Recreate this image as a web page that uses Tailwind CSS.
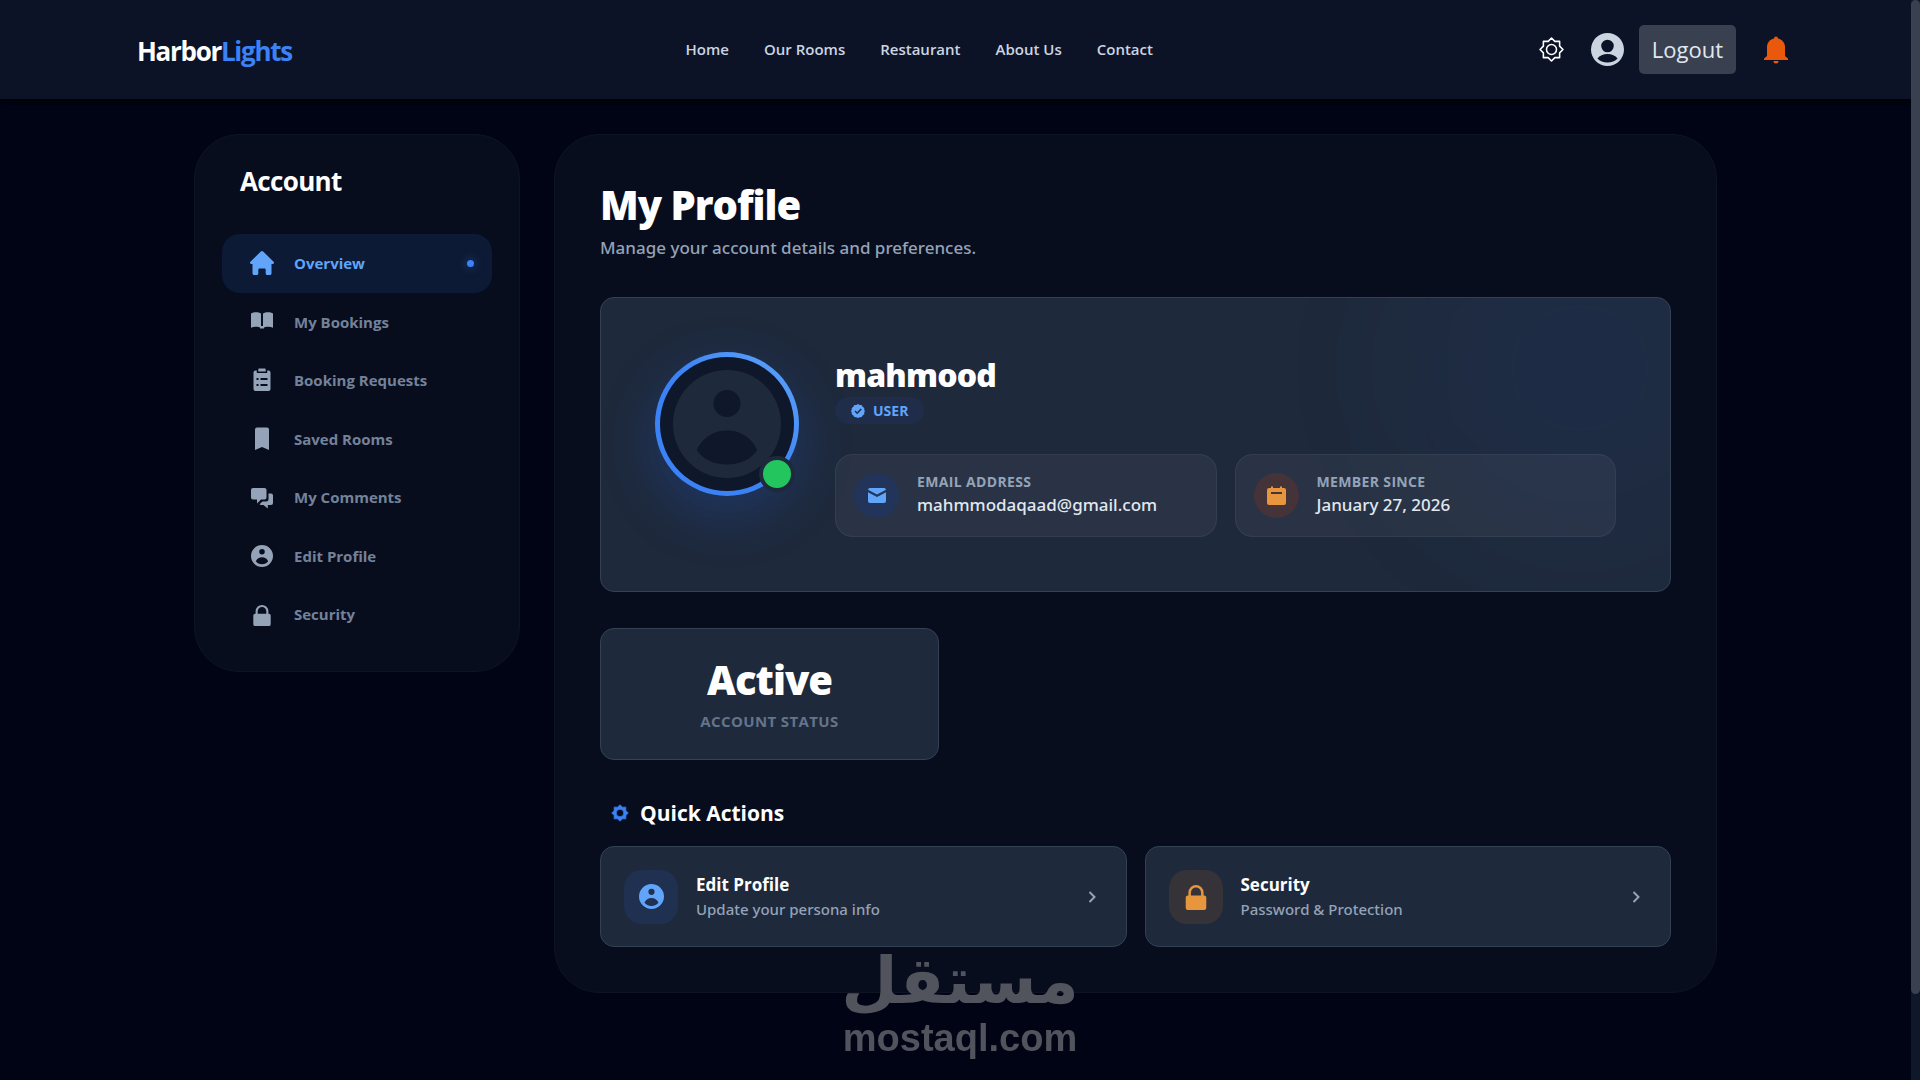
<!DOCTYPE html>
<html lang="en">

<head>
    <meta charset="UTF-8">
    <meta name="viewport" content="width=device-width, initial-scale=1.0">
    <title>HarborLights - My Profile</title>
    <script src="https://cdn.jsdelivr.net/npm/@tailwindcss/browser@4"></script>
</head>

<body class="min-h-screen overflow-hidden bg-[#010414] font-['Open_Sans','Noto_Sans',sans-serif] text-white">

    <!-- shared icons -->
    <svg class="hidden">
        <symbol id="icon-user" viewBox="2 2 20 20">
            <path fill-rule="evenodd" d="M12 2a10 10 0 1 1 0 20 10 10 0 0 1 0-20zM12 5.7a2.5 2.5 0 1 0 0 5 2.5 2.5 0 0 0 0-5zM6.4 16.8c1.1 1.7 3.2 2.7 5.6 2.7s4.5-1 5.6-2.7c-1-2.2-3.1-3.6-5.6-3.6s-4.6 1.4-5.6 3.6z" />
        </symbol>
        <symbol id="icon-lock" viewBox="0 0 24 24">
            <path fill-rule="evenodd" d="M5 10.5V8a7 7 0 0 1 14 0v2.5h.5a2 2 0 0 1 2 2V22a2 2 0 0 1-2 2h-15a2 2 0 0 1-2-2v-9.500a2 2 0 0 1 2-2zM7.300 10.500h9.400V8a4.700 4.700 0 0 0-9.400 0z" />
        </symbol>
        <symbol id="icon-chevron" viewBox="0 0 8 12">
            <path d="M1.5 1l5 5-5 5" fill="none" stroke="currentColor" stroke-width="2" />
        </symbol>
    </svg>

    <div class="pr-[9px]">
        <!--header-->
        <header class="relative bg-[#0d1326] shadow-md shadow-black/50">
            <div class="flex h-[99px] items-center justify-between pr-[123px] pl-[137px]">
                <a href="#" class="pt-1 pr-2 text-[26px] font-bold tracking-tighter">Harbor<span class="text-[#3b82f6]">Lights</span></a>
                <nav class="flex gap-[35px] text-[15px] font-semibold text-[#cbd5e1]">
                    <a href="#">Home</a>
                    <a href="#">Our Rooms</a>
                    <a href="#">Restaurant</a>
                    <a href="#">About Us</a>
                    <a href="#">Contact</a>
                </nav>
                <div class="flex items-center">
                    <button aria-label="Settings" class="mr-[27px]">
                        <svg class="size-[25px]" viewBox="0 0 24 24" fill="none" stroke="currentColor" stroke-width="1.5" stroke-linejoin="round">
                            <path d="M12 1l3.2 3.2h4.6v4.6L23 12l-3.2 3.2v4.6h-4.6L12 23l-3.2-3.2H4.2v-4.6L1 12l3.2-3.2V4.2h4.6z" />
                            <circle cx="12" cy="12" r="4.8" />
                        </svg>
                    </button>
                    <a href="#" aria-label="Profile" class="mr-[15px] text-[#cbd5e1]">
                        <svg class="size-[33px]" viewBox="2 2 20 20" fill="currentColor">
                            <path fill-rule="evenodd" d="M12 2a10 10 0 1 1 0 20 10 10 0 0 1 0-20zM12 6.1a3.8 3.8 0 1 0 0 7.6 3.8 3.8 0 0 0 0-7.6zM5.9 17.5c1.4 1.5 3.6 2.4 6.1 2.4s4.7-.9 6.1-2.4c-1.3-1.7-3.5-2.7-6.1-2.7s-4.8 1-6.1 2.7z" />
                        </svg>
                    </a>
                    <button class="mr-7 h-[49px] rounded-[5px] bg-[#394150] px-[13px] text-[22px] text-[#e2e8f0]">Logout</button>
                    <button aria-label="Notifications" class="text-[#ea580c]">
                        <svg class="h-7 w-6" viewBox="0 0 24 28" fill="currentColor">
                            <path d="M10 2.5a2 2 0 0 1 4 0c4.5 1 7 4.5 7 8.5v9l3 2.5V24H0v-1.5L3 20v-9c0-4 2.5-7.5 7-8.5zM9.5 25h5a2.5 2.5 0 0 1-5 0z" />
                        </svg>
                    </button>
                </div>
            </div>
        </header>

        <!--body-->
        <div class="mx-auto flex max-w-[1523px] items-start gap-[34px] pt-[35px]">
            <!--sidebar-->
            <aside class="w-[326px] shrink-0 rounded-[45px] border border-[#0f1425] bg-[#080d1e] p-[27px]">
                <h2 class="mb-[34px] pt-px pl-[18px] text-[26px] leading-[37px] font-bold tracking-tight">Account</h2>
                <nav class="grid h-[410px] auto-rows-fr text-[15px] font-bold text-[#748299]">
                    <a href="#" class="flex items-center gap-[19px] rounded-[18px] bg-[#0d1a35] px-[27px] text-[#60a5fa]">
                        <svg class="size-[26px]" viewBox="0 0 26 26" fill="currentColor">
                            <path d="M11.8 1.5a1.8 1.8 0 0 1 2.4 0l10.4 10.3c1 1 .4 2.2-.9 2.2H22.5v9.5c0 .9-.7 1.5-1.5 1.5h-3c-.8 0-1.300-.6-1.300-1.400V20c0-.9-.6-1.400-1.400-1.400h-4.600c-.8 0-1.400.5-1.400 1.400v3.600c0 .8-.5 1.400-1.300 1.400H5c-.8 0-1.500-.6-1.500-1.500V14H2.300c-1.300 0-1.900-1.200-.9-2.200z" />
                        </svg>
                        Overview
                        <span class="-mr-[9px] ml-auto size-[7px] rounded-full bg-[#3b82f6] shadow-[0_0_10px_#3b82f680]"></span>
                    </a>
                    <a href="#" class="flex items-center gap-[19px] px-[27px]">
                        <svg class="size-[26px] text-[#94a3b8]" viewBox="0 0 26 26" fill="currentColor">
                            <path d="M2 4.5c2.5-1.7 7.5-1.7 10 0v14.5c-2.5-1.5-7-1.7-10-.3zM14 4.5c2.5-1.7 7.5-1.7 10 0v14.2c-3-1.4-7.5-1.2-10 .3z" />
                            <path d="M11 17h4v2.5h-4z" />
                        </svg>
                        My Bookings
                    </a>
                    <a href="#" class="flex items-center gap-[19px] px-[27px]">
                        <svg class="size-[26px] text-[#94a3b8]" viewBox="0 0 26 26" fill="currentColor">
                            <path d="M10.3 1.5h5.4c.6 0 1 .4 1 1v2h-7.4v-2c0-.6.4-1 1-1z" />
                            <path fill-rule="evenodd" d="M7.8 3.5H6.5a2 2 0 0 0-2 2V22a2 2 0 0 0 2 2h13a2 2 0 0 0 2-2V5.5a2 2 0 0 0-2-2h-1.3V6H7.8zM7.5 11h2v2h-2zM11.5 11h7v2h-7zM7.5 17h2v2h-2zM11.5 17h7v2h-7z" />
                        </svg>
                        Booking Requests
                    </a>
                    <a href="#" class="flex items-center gap-[19px] px-[27px]">
                        <svg class="size-[26px] text-[#94a3b8]" viewBox="0 0 26 26" fill="currentColor">
                            <path d="M8 1.5h10a2 2 0 0 1 2 2V24l-7-3-7 3V3.5a2 2 0 0 1 2-2z" />
                        </svg>
                        Saved Rooms
                    </a>
                    <a href="#" class="flex items-center gap-[19px] px-[27px]">
                        <svg class="size-[26px] text-[#94a3b8]" viewBox="0 0 26 26" fill="currentColor">
                            <path d="M4 3h11.5a2 2 0 0 1 2 2v7.5a2 2 0 0 1-2 2H12L8 18.5v-4H4a2 2 0 0 1-2-2V5a2 2 0 0 1 2-2z" />
                            <path d="M19.5 8.5h2.5a2 2 0 0 1 2 2v7.5a2 2 0 0 1-2 2h-3.2V23.5L14.5 20H12a2 2 0 0 1-1.5-.8l3-2.7H17a2.5 2.5 0 0 0 2.5-2.5z" />
                        </svg>
                        My Comments
                    </a>
                    <a href="#" class="flex items-center gap-[19px] px-[27px]">
                        <svg class="h-[22px] w-[26px] text-[#94a3b8]" fill="currentColor"><use href="#icon-user" /></svg>
                        Edit Profile
                    </a>
                    <a href="#" class="flex items-center gap-[19px] px-[27px]">
                        <svg class="h-[22px] w-[26px] text-[#94a3b8]" fill="currentColor"><use href="#icon-lock" /></svg>
                        Security
                    </a>
                </nav>
            </aside>

            <!--profile-->
            <main class="min-w-0 flex-1 rounded-[45px] border border-[#0f1425] bg-[#080d1e] p-[45px]">
                <h1 class="text-[40px] leading-[50px] font-extrabold tracking-tight">My Profile</h1>
                <p class="mt-1 font-['Noto_Sans',sans-serif] text-[17px] leading-[27px] font-medium text-[#94a3b8]">Manage your account details and preferences.</p>

                <section class="relative mt-9 flex items-start gap-9 overflow-hidden rounded-[14px] border border-[#334155] bg-[#1e293b] p-[54px]">
                    <div class="absolute -top-[110px] -right-[90px] size-[360px] rounded-full bg-[#2563eb]/5 blur-3xl"></div>
                    <div class="relative size-36 shrink-0 rounded-full bg-linear-to-tr from-[#3b82f6] from-50% to-[#60a5fa] p-[5px] shadow-[0_18px_54px_#2563eb40]">
                        <div class="flex size-full items-center justify-center rounded-full bg-[#0f172a] text-[#1e293b]">
                            <svg class="size-[108px]" fill="currentColor"><use href="#icon-user" /></svg>
                        </div>
                        <span class="absolute right-1 bottom-1 size-9 rounded-full border-4 border-[#1e293b] bg-[#22c55e]"></span>
                    </div>
                    <div class="relative flex-1">
                        <h2 class="text-[32px] leading-[45px] font-extrabold tracking-tight">mahmood</h2>
                        <span class="inline-flex h-[27px] items-center gap-2 rounded-full bg-[#1f2d4a] px-4 text-[14px] font-bold text-[#60a5fa]">
                            <svg class="size-[14px]" viewBox="0 0 14 14">
                                <path fill="currentColor" d="M7 0l1.7.9 2 .1.9 1.800L13.300 4l-.1 2 .8 1-.8 1.500.1 1.800-1.700 1.100-.9 1.700-2 .1L7 14l-1.700-.8-2-.1-.9-1.700L.7 10.300l.1-1.800L0 7l.8-1.500L.7 4l1.700-1.200L3.300 1l2-.1z" />
                                <path fill="none" stroke="#1f2d4a" stroke-width="1.6" d="M4 7l2.2 2.2L10.2 5" />
                            </svg>
                            USER
                        </span>
                        <div class="mt-[30px] grid grid-cols-2 gap-[18px]">
                            <div class="flex h-[83px] items-center gap-[18px] rounded-[18px] border border-white/5 bg-white/5 px-[18px]">
                                <div class="flex size-[45px] items-center justify-center rounded-full bg-[#23345a] text-[#60a5fa]">
                                    <svg class="h-[15px] w-[18px]" viewBox="0 0 18 15" fill="currentColor">
                                        <path d="M2 0h14a2 2 0 0 1 2 1.8L9 6.5 0 1.8A2 2 0 0 1 2 0zM0 4.2L9 9l9-4.8V13a2 2 0 0 1-2 2H2a2 2 0 0 1-2-2z" />
                                    </svg>
                                </div>
                                <div>
                                    <div class="text-[14px] leading-[18px] font-bold tracking-wide text-[#94a3b8]">EMAIL ADDRESS</div>
                                    <div class="font-['Noto_Sans',sans-serif] text-[17px] leading-[27px] font-medium text-[#e2e8f0]">mahmmodaqaad@gmail.com</div>
                                </div>
                            </div>
                            <div class="flex h-[83px] items-center gap-[18px] rounded-[18px] border border-white/5 bg-white/5 px-[18px]">
                                <div class="flex size-[45px] items-center justify-center rounded-full bg-[#443338] text-[#e8963e]">
                                    <svg class="size-[19px]" viewBox="0 0 19 19" fill="currentColor">
                                        <path fill-rule="evenodd" d="M4 .5h2V2h7V.5h2V2h2a2 2 0 0 1 2 2v13a2 2 0 0 1-2 2H2a2 2 0 0 1-2-2V4a2 2 0 0 1 2-2h2zM4 6v2h11V6z" />
                                    </svg>
                                </div>
                                <div>
                                    <div class="text-[14px] leading-[18px] font-bold tracking-wide text-[#94a3b8]">MEMBER SINCE</div>
                                    <div class="font-['Noto_Sans',sans-serif] text-[17px] leading-[27px] font-medium text-[#e2e8f0]">January 27, 2026</div>
                                </div>
                            </div>
                        </div>
                    </div>
                </section>

                <div class="mt-9 grid grid-cols-3 gap-[27px]">
                    <div class="rounded-[14px] border border-[#334155] bg-[#1e293b] py-[26px] text-center">
                        <div class="text-[40px] leading-[50px] font-extrabold tracking-tight">Active</div>
                        <div class="mt-1 text-[15px] leading-6 font-bold tracking-wide text-[#64748b]">ACCOUNT STATUS</div>
                    </div>
                </div>

                <h3 class="mt-[38px] flex items-center gap-[11px] pl-[11px] text-[21px] leading-[30px] font-bold">
                    <svg class="size-[18px] text-[#3b82f6]" viewBox="0 0 24 24" fill="currentColor" stroke="currentColor" stroke-width="1" stroke-linejoin="round">
                        <path fill-rule="evenodd" d="M12 1l3.2 3.2h4.6v4.6L23 12l-3.2 3.2v4.6h-4.6L12 23l-3.2-3.2H4.2v-4.6L1 12l3.2-3.2V4.2h4.6zM12 7a5 5 0 1 0 0 10 5 5 0 0 0 0-10z" />
                    </svg>
                    Quick Actions
                </h3>
                <div class="mt-[18px] grid grid-cols-2 gap-[18px]">
                    <a href="#" class="flex h-[101px] items-center gap-[18px] rounded-[14px] border border-[#334155] bg-[#1e293b] pr-[30px] pl-[23px]">
                        <span class="flex size-[54px] items-center justify-center rounded-[18px] bg-[#203050] text-[#60a5fa]">
                            <svg class="size-[25px]" fill="currentColor"><use href="#icon-user" /></svg>
                        </span>
                        <span>
                            <span class="block text-[17px] leading-[25px] font-bold">Edit Profile</span>
                            <span class="block font-['Noto_Sans',sans-serif] text-[15px] leading-[25px] font-medium text-[#94a3b8]">Update your persona info</span>
                        </span>
                        <svg class="ml-auto h-3 w-2 text-[#94a3b8]"><use href="#icon-chevron" /></svg>
                    </a>
                    <a href="#" class="flex h-[101px] items-center gap-[18px] rounded-[14px] border border-[#334155] bg-[#1e293b] pr-[30px] pl-[23px]">
                        <span class="flex size-[54px] items-center justify-center rounded-[18px] bg-[#353238] text-[#e8963e]">
                            <svg class="size-[26px]" fill="currentColor"><use href="#icon-lock" /></svg>
                        </span>
                        <span>
                            <span class="block text-[17px] leading-[25px] font-bold">Security</span>
                            <span class="block font-['Noto_Sans',sans-serif] text-[15px] leading-[25px] font-medium text-[#94a3b8]">Password &amp; Protection</span>
                        </span>
                        <svg class="ml-auto h-3 w-2 text-[#94a3b8]"><use href="#icon-chevron" /></svg>
                    </a>
                </div>
            </main>
        </div>
    </div>

    <!-- scrollbar -->
    <div class="fixed inset-y-0 right-0 w-[9px] bg-[#0f172a]">
        <div class="h-[92%] rounded-full bg-[#394150]"></div>
    </div>

    <!-- watermark -->
    <div class="pointer-events-none fixed inset-x-0 bottom-5 flex flex-col items-center text-[#51535d]">
        <div lang="ar" dir="rtl" class="font-['DejaVu_Sans',sans-serif] text-[65px] leading-[70px] font-bold">مستقل</div>
        <div class="font-['Liberation_Sans',sans-serif] text-[38px] leading-[44px] font-bold">mostaql.com</div>
    </div>

</body>

</html>
